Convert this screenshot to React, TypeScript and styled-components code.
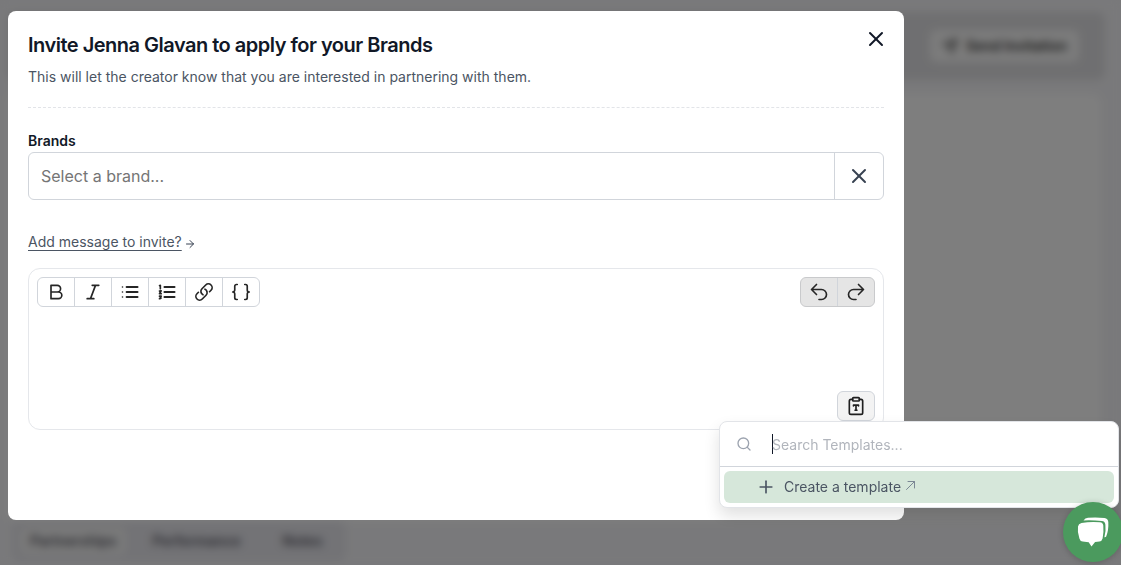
import React from 'react';
import styled, { createGlobalStyle } from 'styled-components';
import { X, Search, Plus, Send, ArrowRight } from 'lucide-react';

const GlobalStyle = createGlobalStyle`
  *, *::before, *::after { box-sizing: border-box; }
  body { margin: 0; font-family: Inter, 'Liberation Sans', sans-serif; font-size: 14px; line-height: 20px; color: #111827; }
  button, input, textarea { font: inherit; color: inherit; margin: 0; }
  button { padding: 0; border: 0; background: none; cursor: pointer; }
  h1, p { margin: 0; }
  svg { display: block; flex: none; }
`;

const Stage = styled.div`
  height: 100vh;
  overflow: hidden;
`;

/* Page behind the dialog */
const Page = styled.div`
  display: flex;
  flex-direction: column;
  height: 100%;
  padding: 12px 16px 0 8px;
  background: #f3f3f6;
`;

const PageHeader = styled.header`
  display: flex;
  justify-content: flex-end;
  align-items: center;
  flex: none;
  height: 68px;
  padding: 0 26px;
  border-radius: 8px;
  background: #dfdfe2;
`;

const SendButton = styled.button`
  display: flex;
  align-items: center;
  gap: 8px;
  height: 32px;
  padding: 0 12px;
  border-radius: 6px;
  background: #f8f8f8;
  color: #333;
  font-weight: 600;
`;

const PagePanel = styled.section`
  flex: 1;
  margin: 14px 4px 0 0;
  border-radius: 8px;
  background: #fdfdfd;
`;

const TabBar = styled.nav`
  display: flex;
  align-self: flex-start;
  align-items: center;
  margin: 0 4px 4px;
  padding: 6px 8px;
  border-radius: 8px;
  background: #e6e6ec;
`;

const Tab = styled.button<{ $active?: boolean }>`
  padding: 4px 10px;
  min-width: 72px;
  border-radius: 6px;
  background: ${(p) => (p.$active ? '#f4f4f4' : 'transparent')};
  color: #5a5a66;
  font-weight: 600;
  & + & { margin-left: 16px; }
`;

const Overlay = styled.div`
  position: fixed;
  inset: 0;
  padding: 11px 8px;
  background: rgba(0, 0, 0, 0.5);
  backdrop-filter: blur(4px);
`;

const Dialog = styled.section`
  max-width: 896px;
  padding: 20px 20px 90px;
  border-radius: 8px;
  background: #fff;
`;

const DialogHeader = styled.header`
  display: flex;
  justify-content: space-between;
  align-items: flex-start;
  padding-bottom: 20px;
  border-bottom: 1px dashed #e2e4e8;
`;

const Title = styled.h1`
  font-size: 20px;
  line-height: 28px;
  font-weight: 600;
  letter-spacing: -0.025em;
`;

const Subtitle = styled.p`
  margin-top: 8px;
  color: #4b5563;
`;

const CloseButton = styled.button`
  margin: -4px -4px 0 0;
`;

const Label = styled.label`
  display: block;
  margin-top: 23px;
  font-weight: 600;
`;

const Field = styled.div`
  display: flex;
  height: 48px;
  margin-top: 1px;
  border: 1px solid #d1d5db;
  border-radius: 6px;
`;

const BrandInput = styled.input`
  flex: 1;
  min-width: 0;
  padding: 0 12px;
  border: 0;
  outline: 0;
  background: transparent;
  font-size: 16px;
  &::placeholder { color: #757575; opacity: 1; }
`;

const ClearButton = styled.button`
  display: flex;
  align-items: center;
  justify-content: center;
  width: 49px;
  border-left: 1px solid #d1d5db;
  color: #374151;
`;

const MessageRow = styled.div`
  display: flex;
  align-items: flex-end;
  gap: 2px;
  margin-top: 32px;
  color: #374151;
`;

const MessageLink = styled.a`
  color: #4b5563;
  text-decoration: underline;
  text-underline-offset: 3px;
`;

const LinkArrow = styled(ArrowRight)`
  margin-bottom: 2px;
`;

const Editor = styled.div`
  display: flex;
  flex-direction: column;
  margin-top: 16px;
  padding: 8px;
  border: 1px solid #e5e7eb;
  border-radius: 12px;
`;

const Toolbar = styled.div`
  display: flex;
  justify-content: space-between;
`;

const ToolGroup = styled.div<{ $muted?: boolean }>`
  display: flex;
  height: 30px;
  border: 1px solid ${(p) => (p.$muted ? '#c9cacc' : '#d1d5db')};
  border-radius: 6px;
  overflow: hidden;
  background: ${(p) => (p.$muted ? '#e5e5e5' : '#fff')};
`;

const ToolButton = styled.button`
  display: flex;
  align-items: center;
  justify-content: center;
  width: 37px;
  color: #262626;
  & + & { border-left: 1px solid #d1d5db; }
  &:first-child { width: 36px; }
`;

const MessageBox = styled.textarea`
  height: 84px;
  border: 0;
  outline: 0;
  resize: none;
  background: transparent;
`;

const TemplateAnchor = styled.div`
  position: relative;
  align-self: flex-end;
`;

const TemplateButton = styled.button`
  display: flex;
  align-items: center;
  justify-content: center;
  width: 38px;
  height: 30px;
  border: 1px solid #d1d5db;
  border-radius: 6px;
  background: #f3f3f3;
  color: #1f1f1f;
`;

const TemplateMenu = styled.div`
  position: absolute;
  top: 100%;
  right: -244px;
  width: 400px;
  border: 1px solid #e2e4e8;
  border-radius: 8px;
  background: #fff;
  box-shadow: 0 8px 16px rgba(0, 0, 0, 0.12);
`;

const SearchRow = styled.div`
  display: flex;
  align-items: center;
  height: 45px;
  padding: 0 16px;
  border-bottom: 1px solid #d1d5db;
  color: #9ca3af;
`;

const Caret = styled.span`
  width: 1px;
  height: 20px;
  margin: 0 -1px 0 20px;
  background: #111827;
`;

const SearchInput = styled.input`
  flex: 1;
  min-width: 0;
  padding: 2px 0 0;
  border: 0;
  outline: 0;
  background: transparent;
  color: #111827;
  &::placeholder { color: #b1b5bc; opacity: 1; }
`;

const MenuItem = styled.button`
  display: flex;
  align-items: center;
  width: calc(100% - 8px);
  height: 32px;
  margin: 4px;
  padding: 0 32px;
  border-radius: 6px;
  background: #d6e7da;
  color: #4b5563;
`;

const ItemText = styled.span`
  margin: 0 4px 0 8px;
`;

const ChatButton = styled.button`
  position: fixed;
  right: -2px;
  bottom: 3px;
  display: flex;
  align-items: center;
  justify-content: center;
  width: 60px;
  height: 60px;
  border-radius: 50%;
  background: #4b9a5e;
  box-shadow: 0 1px 6px rgba(0, 0, 0, 0.2);
`;

const Glyph = ({ children, size = 20, weight = 2 }: { children: React.ReactNode; size?: number; weight?: number }) => (
  <svg width={size} height={size} viewBox="0 0 24 24" fill="none" stroke="currentColor" strokeWidth={weight} strokeLinecap="round" strokeLinejoin="round" aria-hidden="true">
    {children}
  </svg>
);

const tools = [
  { name: 'Bold', icon: <path d="M6 4h7.500a4 4 0 0 1 0 8H6zM6 12h9a4 4 0 0 1 0 8H6z" /> },
  { name: 'Italic', icon: <path d="M5 20h8M11 4h8M15 4 9 20" /> },
  { name: 'Bulleted list', icon: <><path d="M8 6h13M8 12h13M8 18h13" strokeWidth="2.500" /><path d="M3 6h.01M3 12h.01M3 18h.01" /></> },
  { name: 'Numbered list', icon: <><path d="M9 6h12M9 12h12M9 18h12" strokeWidth="2.500" /><path d="M3 4.500 4 4v4M3 11l2-.5L3 14h2M3 17h2l-1 1.500q2 1.500-1 1.500" /></> },
  { name: 'Link', icon: <path d="M13.190 8.688a4.500 4.500 0 0 1 1.242 7.244l-4.500 4.500a4.500 4.500 0 0 1-6.364-6.364l1.757-1.757m13.350-.622 1.757-1.757a4.500 4.500 0 0 0-6.364-6.364l-4.500 4.500a4.500 4.500 0 0 0 1.242 7.244" /> },
  { name: 'Insert variable', icon: <path d="M7.500 3h-1a2 2 0 0 0-2 2v4.500A2.500 2.500 0 0 1 2 12a2.500 2.500 0 0 1 2.500 2.500V19a2 2 0 0 0 2 2h1M16.500 3h1a2 2 0 0 1 2 2v4.500A2.500 2.500 0 0 0 22 12a2.500 2.500 0 0 0-2.500 2.500V19a2 2 0 0 1-2 2h-1" /> },
];

export default function App() {
  return (
    <Stage>
      <GlobalStyle />
      <Page aria-hidden="true">
        <PageHeader>
          <SendButton><Send size={16} />Send Invitation</SendButton>
        </PageHeader>
        <PagePanel />
        <TabBar>
          <Tab $active>Partnerships</Tab>
          <Tab>Performance</Tab>
          <Tab>Notes</Tab>
        </TabBar>
      </Page>
      <Overlay>
        <Dialog role="dialog" aria-modal="true" aria-labelledby="invite-title">
          <DialogHeader>
            <div>
              <Title id="invite-title">Invite Jenna Glavan to apply for your Brands</Title>
              <Subtitle>This will let the creator know that you are interested in partnering with them.</Subtitle>
            </div>
            <CloseButton aria-label="Close"><X size={24} strokeWidth={2} /></CloseButton>
          </DialogHeader>
          <Label htmlFor="brand">Brands</Label>
          <Field>
            <BrandInput id="brand" role="combobox" aria-expanded="false" placeholder="Select a brand..." />
            <ClearButton aria-label="Clear brand"><X size={24} strokeWidth={2} /></ClearButton>
          </Field>
          <MessageRow>
            <MessageLink href="#message">Add message to invite?</MessageLink>
            <LinkArrow size={12} />
          </MessageRow>
          <Editor>
            <Toolbar>
              <ToolGroup>
                {tools.map((t) => (
                  <ToolButton key={t.name} aria-label={t.name}><Glyph>{t.icon}</Glyph></ToolButton>
                ))}
              </ToolGroup>
              <ToolGroup $muted>
                <ToolButton aria-label="Undo"><Glyph><path d="M9 15 3 9m0 0 6-6M3 9h12a6 6 0 0 1 0 12h-3" /></Glyph></ToolButton>
                <ToolButton aria-label="Redo"><Glyph><path d="m15 15 6-6m0 0-6-6m6 6H9a6 6 0 0 0 0 12h3" /></Glyph></ToolButton>
              </ToolGroup>
            </Toolbar>
            <MessageBox id="message" aria-label="Message" />
            <TemplateAnchor>
              <TemplateButton aria-label="Templates">
                <Glyph>
                  <rect x="8" y="2" width="8" height="4" rx="1" />
                  <path d="M16 4h2a2 2 0 0 1 2 2v14a2 2 0 0 1-2 2H6a2 2 0 0 1-2-2V6a2 2 0 0 1 2-2h2M9 12v-1h6v1M12 11v6M11 17h2" />
                </Glyph>
              </TemplateButton>
              <TemplateMenu>
                <SearchRow>
                  <Search size={16} />
                  <Caret />
                  <SearchInput aria-label="Search templates" placeholder="Search Templates..." />
                </SearchRow>
                <MenuItem>
                  <Plus size={20} strokeWidth={2} />
                  <ItemText>Create a template</ItemText>
                  <svg width="12" height="16" viewBox="0 0 12 16" fill="none" stroke="#7b8794" strokeLinecap="round" strokeLinejoin="round" aria-hidden="true">
                    <path d="M1.500 10.500 9.500 2.500M3 2.500h6.500V9" />
                  </svg>
                </MenuItem>
              </TemplateMenu>
            </TemplateAnchor>
          </Editor>
        </Dialog>
      </Overlay>
      <ChatButton aria-label="Open chat">
        <svg width="32" height="32" viewBox="0 0 32 32" fill="#fff" aria-hidden="true">
          <path d="M6.500 4.500Q8 2 11 1.800q8-.8 16.500.2 3.500.5 3.800 4 .5 8-2.100 14.500-.5 1-1.800.8 1.700-6.300 1-12.500-.3-3.400-3.600-3.700Q15 4 6.500 4.500Z" />
          <path d="M4.500 7Q14 5.300 23 6.300q3 .3 3.300 3.300.6 7-.7 13-.6 2.600-3.200 2.900l-4.300.4L14.500 30.500 11.700 26.200l-6-.6Q3 25.300 2.400 22.600 .2 16 1 10.500q.4-2.700 3.500-3.500Z" />
        </svg>
      </ChatButton>
    </Stage>
  );
}
